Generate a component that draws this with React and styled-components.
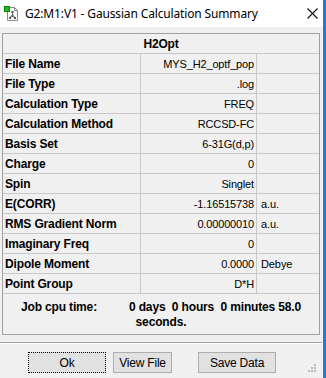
import React from "react"
import styled, { createGlobalStyle } from "styled-components"

const GlobalStyle = createGlobalStyle`
  html, body {
    margin: 0;
    padding: 0;
    background: #f0f0f0;
  }
  * {
    box-sizing: border-box;
  }
`

const rows = [
  { label: "File Name", value: "MYS_H2_optf_pop" },
  { label: "File Type", value: ".log" },
  { label: "Calculation Type", value: "FREQ" },
  { label: "Calculation Method", value: "RCCSD-FC" },
  { label: "Basis Set", value: "6-31G(d,p)" },
  { label: "Charge", value: "0" },
  { label: "Spin", value: "Singlet" },
  { label: "E(CORR)", value: "-1.16515738", unit: "a.u." },
  { label: "RMS Gradient Norm", value: "0.00000010", unit: "a.u." },
  { label: "Imaginary Freq", value: "0" },
  { label: "Dipole Moment", value: "0.0000", unit: "Debye" },
  { label: "Point Group", value: "D*H" },
]

const AppIcon = () => (
  <svg width="14" height="15" viewBox="0 0 14 15">
    <path d="M3.5 1.5h7l3 3v10h-10z" fill="#fff" stroke="#8a8a8a" />
    <path d="M10.5 1.5v3h3" fill="none" stroke="#8a8a8a" />
    <path d="M8.5 6v3M8.5 9l-2.5 3M8.5 9l2.5 3" stroke="#707070" strokeWidth="1.2" fill="none" />
    <rect x="7.5" y="5" width="2" height="2" fill="#555" />
    <rect x="5" y="11" width="2" height="2" fill="#555" />
    <rect x="10" y="11" width="2" height="2" fill="#555" />
    <rect x="0.5" y="0.5" width="5" height="5" fill="#20c020" stroke="#108010" />
  </svg>
)

const CloseIcon = () => (
  <svg width="11" height="11" viewBox="0 0 11 11">
    <path d="M0.5 0.5l10 10M10.5 0.5l-10 10" stroke="#111" strokeWidth="1.1" fill="none" />
  </svg>
)

const Grip = () => (
  <svg width="8" height="8" viewBox="0 0 8 8">
    <rect x="6" y="0" width="2" height="2" fill="#b8b8b8" />
    <rect x="3" y="3" width="2" height="2" fill="#b8b8b8" />
    <rect x="6" y="3" width="2" height="2" fill="#b8b8b8" />
    <rect x="0" y="6" width="2" height="2" fill="#b8b8b8" />
    <rect x="3" y="6" width="2" height="2" fill="#b8b8b8" />
    <rect x="6" y="6" width="2" height="2" fill="#b8b8b8" />
  </svg>
)

const App = () => {
  return (
    <>
      <GlobalStyle />
      <Window>
        <TitleBar>
          <IconSlot>
            <AppIcon />
          </IconSlot>
          <Title>G2:M1:V1 - Gaussian Calculation Summary</Title>
          <CloseButton>
            <CloseIcon />
          </CloseButton>
        </TitleBar>

        <Body>
          <Table>
            <HeaderCell>H2Opt</HeaderCell>
            {rows.map((row) => (
              <Row key={row.label}>
                <LabelCell>{row.label}</LabelCell>
                <ValueCell>{row.value}</ValueCell>
                <UnitCell>{row.unit}</UnitCell>
              </Row>
            ))}
            <JobArea>
              <JobLine>
                <span>Job cpu time:</span>
                <span>0 days&nbsp;&nbsp;0 hours&nbsp;&nbsp;0 minutes 58.0</span>
              </JobLine>
              <JobLine>seconds.</JobLine>
            </JobArea>
          </Table>

          <Separator />

          <ButtonBar>
            <Button $focused $width={78}>Ok</Button>
            <Button $width={59}>View File</Button>
            <Button $width={78} $gap={26}>Save Data</Button>
            <GripSlot>
              <Grip />
            </GripSlot>
          </ButtonBar>
        </Body>
      </Window>
    </>
  )
}

const Window = styled.div`
  width: 326px;
  height: 378px;
  display: flex;
  flex-direction: column;
  background: #f0f0f0;
  border-right: 3px solid #1a7fd4;
  overflow: hidden;
`

const TitleBar = styled.div`
  height: 27px;
  flex: none;
  display: flex;
  align-items: center;
  background: #fff;
  padding-left: 4px;
`

const IconSlot = styled.div`
  width: 14px;
  height: 15px;
  display: flex;
  margin-top: -1px;
`

const Title = styled.div`
  flex: 1;
  margin-left: 7px;
  font-family: "Noto Sans", "Liberation Sans", sans-serif;
  font-size: 12px;
  letter-spacing: -0.15px;
  color: #000;
  white-space: nowrap;
`

const CloseButton = styled.div`
  width: 11px;
  height: 11px;
  display: flex;
  margin-right: 5px;
`

const Body = styled.div`
  flex: 1;
  display: flex;
  flex-direction: column;
  padding: 6px 0 0 2px;
`

const Table = styled.div`
  width: 318px;
  border: 1px solid #a0a0a0;
  display: flex;
  flex-direction: column;
  font-family: "Liberation Sans", Arial, sans-serif;
  color: #000;
`

const HeaderCell = styled.div`
  height: 20px;
  border-bottom: 1px solid #c8c8c8;
  display: flex;
  align-items: center;
  justify-content: center;
  font-size: 12px;
  font-weight: bold;
  letter-spacing: -0.2px;
`

const Row = styled.div`
  height: 20px;
  display: grid;
  grid-template-columns: 138px 116px 1fr;
  border-bottom: 1px solid #c8c8c8;
`

const LabelCell = styled.div`
  border-right: 1px solid #c8c8c8;
  display: flex;
  align-items: center;
  padding-left: 2px;
  font-size: 12px;
  font-weight: bold;
  letter-spacing: -0.15px;
  white-space: nowrap;
`

const ValueCell = styled.div`
  border-right: 1px solid #c8c8c8;
  display: flex;
  align-items: center;
  justify-content: flex-end;
  padding-right: 2px;
  font-size: 11px;
  letter-spacing: -0.15px;
  white-space: nowrap;
`

const UnitCell = styled.div`
  display: flex;
  align-items: center;
  padding-left: 4px;
  font-size: 11px;
  letter-spacing: -0.1px;
`

const JobArea = styled.div`
  height: 40px;
  display: flex;
  flex-direction: column;
  align-items: center;
  padding-top: 5px;
  font-size: 12px;
  font-weight: bold;
  letter-spacing: -0.15px;
`

const JobLine = styled.div`
  height: 15px;
  display: flex;
  align-items: center;
  gap: 32px;
  white-space: nowrap;
`

const Separator = styled.div`
  width: 322px;
  margin: 7px 0 0 -2px;
  border-top: 1px solid #a0a0a0;
  border-bottom: 1px solid #fff;
`

const ButtonBar = styled.div`
  display: flex;
  align-items: flex-start;
  padding: 8px 0 0 26px;
  gap: 7px;
`

const Button = styled.div`
  width: ${(p) => p.$width}px;
  height: 21px;
  margin-left: ${(p) => (p.$gap ? p.$gap - 7 : 0)}px;
  display: flex;
  align-items: center;
  justify-content: center;
  background: #e1e1e1;
  border: 1px ${(p) => (p.$focused ? "dotted #000" : "solid #adadad")};
  font-family: "Liberation Sans", Arial, sans-serif;
  font-size: 12px;
  letter-spacing: -0.2px;
  color: #000;
`

const GripSlot = styled.div`
  margin-left: auto;
  margin-right: 7px;
  margin-top: 12px;
  display: flex;
`

export default App
